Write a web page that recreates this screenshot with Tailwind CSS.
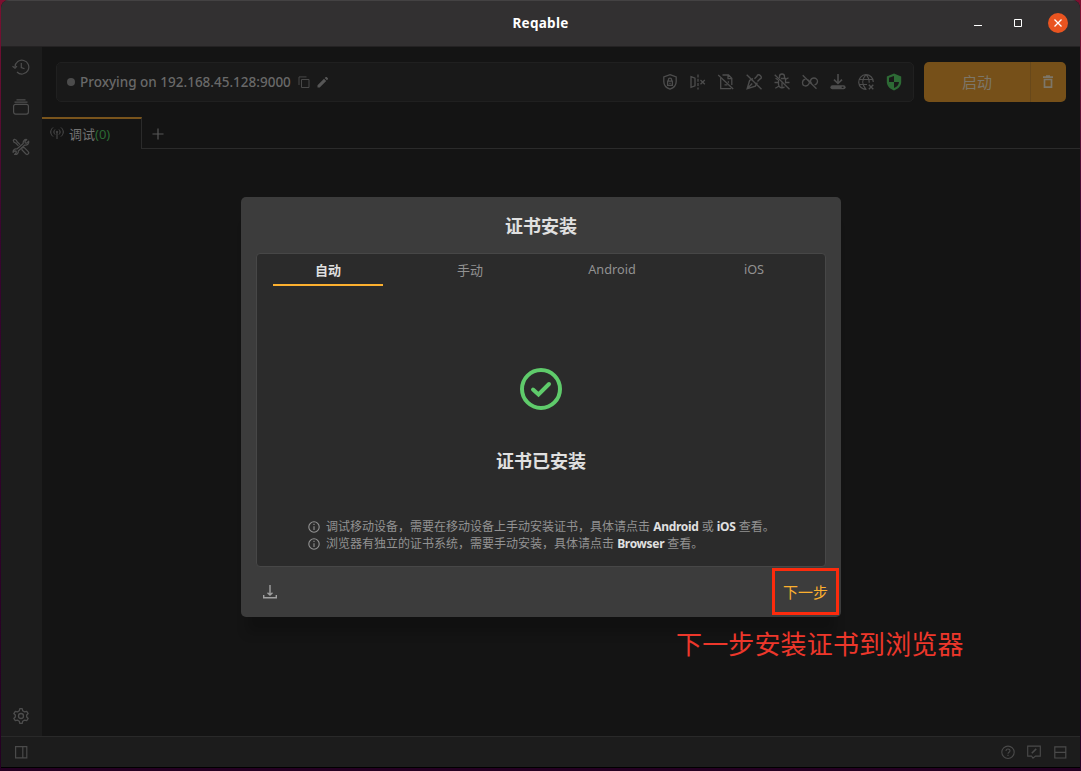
<!DOCTYPE html>
<html lang="zh-CN">
<head>
<meta charset="utf-8">
<title>Reqable</title>
<script src="https://cdn.jsdelivr.net/npm/@tailwindcss/browser@4"></script>
</head>
<body class="w-[1081px] h-[771px] overflow-hidden bg-linear-to-b from-[#7d1030] via-[#3a0530] via-30% to-[#240022] font-['Noto_Sans','Noto_Sans_CJK_SC',sans-serif]">
<div class="relative ml-px w-[1079px] h-[768px] flex flex-col bg-[#141414] rounded-t-lg overflow-hidden border-b border-black">
  <!-- title bar -->
  <header class="h-[47px] pb-[2px] shrink-0 grid grid-cols-[1fr_auto_1fr] items-center bg-[#323031] border-t border-[#444243] border-b border-b-[#242223]">
    <span></span>
    <h1 class="text-[13.500px] leading-[18px] font-bold text-white tracking-[0.300px]">Reqable</h1>
    <div class="flex items-center justify-end pr-3">
      <svg class="w-5 h-5 mr-5" viewBox="0 0 20 20"><path d="M6 12.500h8" stroke="#fff"/></svg>
      <svg class="w-5 h-5 mr-5" viewBox="0 0 20 20"><path d="M6.500 6.500h7v7h-7z" fill="none" stroke="#fff"/></svg>
      <svg class="w-5 h-5" viewBox="0 0 20 20"><circle cx="10" cy="10" r="10" fill="#e95420"/><path d="M6.500 6.500l7 7m0-7l-7 7" stroke="#fff" stroke-width="1.300"/></svg>
    </div>
  </header>

  <div class="flex-1 min-h-0 flex">
    <!-- side navigation -->
    <nav class="w-[41px] bg-[#1c1c1c] flex flex-col items-start pl-[11px] pt-[11px] pb-[11px] text-[#4d4d4d]">
      <svg class="w-[18px] h-[18px]" viewBox="0 0 18 18" fill="none" stroke="currentColor" stroke-width="1.200"><path d="M3 9a6.900 6.900 0 1 1 2 5"/><path d="M.5 8.300L3 10.300l2-2.200M9.300 5v4.500l3.200 1.200"/></svg>
      <svg class="w-[18px] h-[18px] mt-[22px]" viewBox="0 0 18 18" fill="none" stroke="currentColor" stroke-width="1.200"><rect x="1.600" y="6.300" width="14.800" height="9.800" rx="2"/><path d="M2.500 4.200h13M4.500 1.800h9"/></svg>
      <svg class="w-[18px] h-[18px] mt-[22px]" viewBox="0 0 18 18" fill="none" stroke="currentColor" stroke-width="1.200" stroke-linejoin="round"><path d="M6.500 7.800L3.700 5 2 4.200 1.300 2.300l1.200-1 1.900.9.700 1.500 3 2.900"/><path d="M10.500 9.300l1.800.4 3.900 4a1.500 1.500 0 0 1-2.200 2.300l-3.900-4-.5-1.700z"/><path d="M11.200 5.500c-.4-2.300 1-4.300 3.600-4l-1.900 2 .3 1.500 1.500.2 2-2c.5 2.600-1.500 4.300-3.900 3.800L6.300 13c.3 2.300-1.300 3.700-3.700 3.500l1.700-1.800-.2-1.500-1.500-.3-1.500 1.500c-.5-2.400 1.500-3.900 3.800-3.400z"/></svg>
      <span class="flex-1"></span>
      <svg class="w-[18px] h-[18px]" viewBox="0 0 18 18" fill="none" stroke="currentColor" stroke-width="1.300" stroke-linejoin="round"><path d="M7.300 3.800l.5-2.100h2.400l.5 2.100 1.900 1.100 2.100-.6 1.500 2.300-1.500 1.400v2l1.500 1.500-1.500 2.200-2.100-.6-1.900 1.100-.5 2.100H7.800l-.5-2.100-1.900-1.100-2.100.6-1.500-2.200L3.300 10V8L1.800 6.600l1.500-2.300 2.100.6z"/><circle cx="9" cy="9" r="2.500"/></svg>
    </nav>

    <main class="flex-1 min-w-0 flex flex-col">
      <div class="flex gap-[10px] pl-[14px] pr-[14px] pt-[15px]">
        <div class="flex-1 h-10 flex items-center rounded-[5px] bg-[#191919] border border-[#202020] pl-[10px] pr-[10px]">
          <span class="size-2 rounded-full bg-[#4c4c4c]"></span>
          <span class="ml-[5px] w-[211px] text-[13.500px] font-medium text-[#696969] whitespace-nowrap">Proxying on 192.168.45.128:9000</span>
          <svg class="ml-[7px] w-3 h-3 text-[#484848]" viewBox="0 0 12 12" fill="none" stroke="currentColor"><path d="M3.500 3.500h7.500v8H3.500zM1 9V.9h7.500"/></svg>
          <svg class="ml-[7px] w-3 h-3 text-[#565656]" viewBox="0 0 12 12" fill="currentColor"><path d="M.5 9.300v2.200h2.200l6.500-6.500L7 2.800zM10.900 3.300a.8.8 0 0 0 0-1L9.700 1.100a.8.8 0 0 0-1 0l-1 1L9.900 4.300z"/></svg>
          <div class="ml-auto flex gap-[10px] text-[#4d4d4d]">
            <svg class="w-[18px] h-[18px]" viewBox="0 0 18 18" fill="none" stroke="currentColor" stroke-width="1.300"><path d="M9 1.700l6.200 2.200v4.600c0 3.700-2.300 6.300-6.200 7.700-3.900-1.400-6.200-4-6.200-7.700V3.900z"/><path d="M6.600 8.200h4.800v4.200H6.600zM7.400 8V6.800a1.600 1.600 0 0 1 3.200 0V8M9 9.700v1.200"/></svg>
            <svg class="w-[18px] h-[18px]" viewBox="0 0 18 18" fill="none" stroke="currentColor" stroke-width="1.300"><path d="M2 3.700l4 1.500v7.600l-4 1.500z"/><path d="M9 1.500v15" stroke-dasharray="3 1.300"/><path d="M11.500 7l4.300 4.300m0-4.300l-4.300 4.300"/></svg>
            <svg class="w-[18px] h-[18px]" viewBox="0 0 18 18" fill="none" stroke="currentColor" stroke-width="1.300"><path d="M5.500 2h6l3.300 3.300v6.800M3.700 5v10.700h10.500M11 2.300v3.400h3.500M7.500 11.800h3M10.800 9h1.200"/><path d="M1.200 2l15 14"/></svg>
            <svg class="w-[18px] h-[18px]" viewBox="0 0 18 18" fill="none" stroke="currentColor" stroke-width="1.400"><path d="M8 5.600L4.600 7.500 2.200 15.600l8.100-2.400 2-3.500M2.500 15.300l4.700-4.700M9.500 5.700L12 3.200c.3-2 2.300-1.700 3.500-.5s1.200 2.600-.6 3.300l-2.400 2.500"/><path d="M1.700 1.800l14.800 14.400"/></svg>
            <svg class="w-[18px] h-[18px]" viewBox="0 0 18 18" fill="none" stroke="currentColor" stroke-width="1.300"><path d="M6.500 5V3.500a2.500 2.500 0 0 1 5 0V5M7.800 5.500h4.700v5M5.500 7v4.500a3.500 3.500 0 0 0 6 2.300M1.500 9.500h4M12.500 9.500h4M2.300 15.300l3.400-2M2.500 5.200L5 6.700M15.500 4.700l-3 1.800M9 9.500V15"/><path d="M1.700 1.800l14.800 14.400"/></svg>
            <svg class="w-[18px] h-[18px]" viewBox="0 0 18 18" fill="none" stroke="currentColor" stroke-width="1.300"><path d="M4.500 6.200C2.500 6.500 1.500 8 1.500 9.800s1.300 3.200 3.300 3.200 2.700-1.300 3.500-2.700M9.300 7.800c.7-1.700 1.800-2.800 3.600-2.800s3.600 1.300 3.600 3.300-1 3.200-3 3.500M6.700 6.800c1.700.7 2.300 2.300 1.300 3.700M10.900 10.600c-1.400-.8-1.800-2-1.100-3.400"/><path d="M1.700 2.300l13.800 13.500"/></svg>
            <svg class="w-[18px] h-[18px]" viewBox="0 0 18 18" fill="none" stroke="currentColor" stroke-width="1.600"><path d="M9 1v9M5 6.600L9 10.500l4-3.900"/><path d="M3.400 14.300h11.200" stroke-width="4" stroke-linecap="round"/><path d="M12.700 14.300h1.800" stroke="#191919" stroke-width="1.300"/></svg>
            <svg class="w-[18px] h-[18px]" viewBox="0 0 18 18" fill="none" stroke="currentColor" stroke-width="1.200"><path d="M9.500 16.300A7.300 7.300 0 1 1 16.300 9M1.700 6.500h14.600M1.700 11.500H10M9 1.700c-4.300 4.500-4.300 10 0 14.600M9 1.700c2.300 2.300 3.300 5 3.200 8"/><path d="M11.800 11.800l4.500 4.500m0-4.500l-4.500 4.500" stroke-width="1.400"/></svg>
            <svg class="w-[18px] h-[18px]" viewBox="0 0 18 18"><path d="M9 .5l7.200 2.900V9c0 4-3.200 7-7.200 8.400C5 16 1.800 13 1.800 9V3.400z" fill="#2d6a35"/><path d="M9 3v6h5c-.2 3-2 4.800-5 6V9H4V4.800z" fill="#191919"/></svg>
          </div>
        </div>
        <div class="w-[142px] h-10 flex rounded-[5px] bg-[#765019] text-[#7d7668] overflow-hidden">
          <div class="w-[106px] flex items-center justify-center text-[15px] leading-5">启动</div>
          <div class="flex-1 border-l border-[#68481a] flex items-center justify-center pr-px">
            <svg class="w-3 h-[14px]" viewBox="0 0 12 14" fill="none" stroke="currentColor" stroke-width="1.700"><path d="M1 2.200h10M4 1h4M2.500 4.500v7.700h7V4.500z"/></svg>
          </div>
        </div>
      </div>
      <!-- session tabs -->
      <div class="mt-[15px] h-8 flex">
        <div class="w-[100px] border-t-2 border-[#79541c] border-r border-r-[#2b2b2b] flex items-center pl-2">
          <svg class="w-[14px] h-[14px] mb-[2px] text-[#4d4d4d]" viewBox="0 0 14 14" fill="none" stroke="currentColor"><path d="M3 1.500c-3 2.700-3 6.300 0 9M11 1.500c3 2.700 3 6.300 0 9M5 3.500c-1.500 1.500-1.500 3.500 0 5M9 3.500c1.500 1.500 1.500 3.500 0 5M7 6v7"/><circle cx="7" cy="5.800" r=".6"/></svg>
          <span class="ml-[5px] mb-px text-[13px] leading-5 text-[#727272] whitespace-nowrap">调试<span class="text-[#2b6a33]">(0)</span></span>
        </div>
        <div class="flex-1 border-b border-[#2b2b2b] pl-[10px] pt-[11px]">
          <svg class="w-3 h-3" viewBox="0 0 12 12"><path d="M6 .5v11M.5 6h11" stroke="#575757" stroke-width="1.200"/></svg>
        </div>
      </div>
    </main>
  </div>

  <!-- status bar -->
  <footer class="h-[31px] shrink-0 flex items-center bg-[#1c1c1c] border-t border-[#292929] pl-3 pr-[11px] text-[#4a4a4a]">
    <svg class="w-4 h-4" viewBox="0 0 16 16" fill="none" stroke="currentColor" stroke-width="1.200"><path d="M2.600 2.600h11.200v11.200H2.600zM9.800 2.600v11.200"/></svg>
    <div class="ml-auto flex gap-[10px]">
      <svg class="w-4 h-4" viewBox="0 0 16 16" fill="none" stroke="currentColor" stroke-width="1.100"><circle cx="8" cy="8.300" r="6.200"/><path d="M6 7c0-2.700 4-2.500 4-.3C10 8.300 8 8.100 8 9.800M8 10.800v1.300"/></svg>
      <svg class="w-4 h-4" viewBox="0 0 16 16" fill="none" stroke="currentColor" stroke-width="1.100"><path d="M1.700 2.100h12.600v10H9.500l-2.500 2-1.500-2H1.700z"/><path d="M5.800 9.300l4.400-4.400" stroke-width="1.600"/></svg>
      <svg class="w-4 h-4 mr-px" viewBox="0 0 16 16" fill="none" stroke="currentColor" stroke-width="1.200"><path d="M2.800 2.800h11v11.200h-11zM2.800 8.400h11"/></svg>
    </div>
  </footer>

  <!-- certificate dialog -->
  <section class="absolute left-[240px] top-[197px] w-[600px] h-[420px] flex flex-col rounded-[5px] bg-[#3c3c3c] px-[15px] shadow-[0_22px_10px_-6px_rgba(0,0,0,0.18)]">
    <h2 class="h-14 pt-[2px] flex items-center justify-center text-[18px] font-bold text-[#e0e0e0]">证书安装</h2>
    <div class="h-[314px] flex flex-col items-center rounded-[4px] bg-[#2b2b2b] border border-[#474747]">
      <div class="w-full grid grid-cols-4 text-center text-[13px] leading-8 text-[#929292]">
        <div class="mx-4 border-b-2 border-[#fcb02f] h-8 font-bold text-[#dfdfdf]">自动</div>
        <div>手动</div>
        <div class="text-[12.700px] leading-[30px]">Android</div>
        <div class="text-[12.700px] leading-[30px]">iOS</div>
      </div>
      <svg class="mt-[82px] w-[42px] h-[42px]" viewBox="0 0 42 42" fill="none" stroke="#5fcb6b" stroke-width="4"><circle cx="21" cy="21" r="19"/><path d="M13 21.500l5.500 5L29 16" stroke-linecap="round"/></svg>
      <p class="mt-[37px] text-[18px] leading-7 font-bold text-[#e0e0e0]">证书已安装</p>
      <div class="mt-[43px] w-[466px] text-xs leading-[17px] text-[#929292] whitespace-nowrap">
        <p class="flex items-center"><svg class="shrink-0 w-3 h-3 mr-[6px]" viewBox="0 0 12 12" fill="none" stroke="currentColor" stroke-width="1.100"><circle cx="6" cy="6" r="5.200"/><path d="M6 2.800v1.300M6 5.200V9"/></svg><span>调试移动设备，需要在移动设备上手动安装证书，具体请点击 <b class="text-[#e0e0e0] tracking-[-0.300px]">Android</b> 或 <b class="text-[#e0e0e0] tracking-[-0.300px]">iOS</b> 查看。</span></p>
        <p class="flex items-center"><svg class="shrink-0 w-3 h-3 mr-[6px]" viewBox="0 0 12 12" fill="none" stroke="currentColor" stroke-width="1.100"><circle cx="6" cy="6" r="5.200"/><path d="M6 2.800v1.300M6 5.200V9"/></svg><span>浏览器有独立的证书系统，需要手动安装，具体请点击 <b class="text-[#e0e0e0] tracking-[-0.300px]">Browser</b> 查看。</span></p>
      </div>
    </div>
    <div class="flex-1 flex items-center justify-between pl-[7px] -mr-[13px]">
      <svg class="w-[14px] h-[14px]" viewBox="0 0 14 14" fill="none" stroke="#a0a0a0" stroke-width="1.400"><path d="M7 0v9.500M4.500 7.800L7 10l2.500-2.200M.7 10v2.800h12.600V10"/></svg>
      <button class="w-[67px] h-[47px] mb-px border-[3px] border-[#fc2b0d] text-[15px] leading-5 text-[#fcb02f]">下一步</button>
    </div>
  </section>
  <p class="absolute left-[675px] top-[626px] text-[26px] leading-9 tracking-[0.150px] text-[#ed372b] whitespace-nowrap">下一步安装证书到浏览器</p>
</div>
</body>
</html>
